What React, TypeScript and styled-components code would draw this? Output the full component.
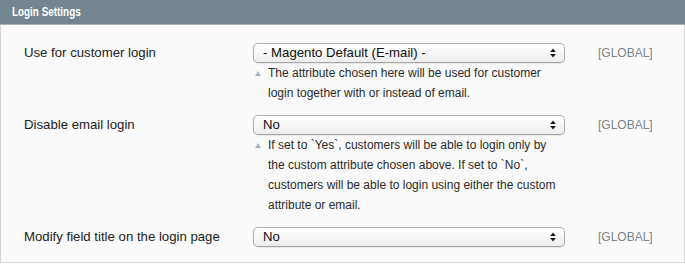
import React from "react";
import styled, { createGlobalStyle } from "styled-components";

const GlobalStyle = createGlobalStyle`
  html, body { margin: 0; padding: 0; background: #ffffff; }
  body { font-family: "Liberation Sans", Arial, Helvetica, sans-serif; }
`;

const Panel = styled.section`
  width: 685px;
`;

const Header = styled.div`
  box-sizing: border-box;
  height: 25px;
  background: #738690;
  border-bottom: 1px solid #a7b3ba;
  padding-left: 12px;
  display: flex;
  align-items: center;
`;

const HeaderTitle = styled.h3`
  margin: 0;
  color: #ffffff;
  font-family: "Liberation Sans", Arial, sans-serif;
  font-weight: bold;
  font-size: 13.2px;
  line-height: 24px;
  transform: scaleX(0.75);
  transform-origin: left center;
  white-space: nowrap;
`;

const Body = styled.div`
  background: #fafafa;
  border: 1px solid #d6d6d6;
  border-top: none;
  padding: 18px 0 15px 23px;
  display: flex;
  flex-direction: column;
  gap: 12px;
`;

const Row = styled.div`
  display: grid;
  grid-template-columns: 229px 312px auto;
  align-items: start;
`;

const Label = styled.label`
  font-size: 13.2px;
  line-height: 20px;
  color: #222;
`;

const Field = styled.div`
  display: flex;
  flex-direction: column;
`;

const SelectWrap = styled.div`
  position: relative;
  height: 20px;
`;

const Select = styled.select`
  appearance: none;
  -webkit-appearance: none;
  width: 100%;
  height: 20px;
  box-sizing: border-box;
  margin: 0;
  padding: 0 24px 0 9px;
  border: 1px solid #b0b0b0;
  border-bottom-color: #a4a4a4;
  border-radius: 5px;
  background: linear-gradient(#ffffff 0%, #f7f7f7 50%, #ececec 100%);
  box-shadow: 0 1px 1px rgba(0, 0, 0, 0.08);
  font-family: "Liberation Sans", Arial, Helvetica, sans-serif;
  font-size: 13.2px;
  line-height: 18px;
  color: #111;
  outline: none;
`;

const Arrows = styled.svg`
  position: absolute;
  right: 9px;
  top: 5px;
  pointer-events: none;
`;

const Note = styled.div`
  display: flex;
  align-items: flex-start;
  padding-left: 2px;
`;

const NoteIcon = styled.span`
  width: 13px;
  flex: none;
  height: 20px;
  display: flex;
  align-items: center;
`;

const NoteText = styled.p`
  margin: 0;
  font-size: 12px;
  line-height: 20px;
  color: #2a2a2a;
`;

const Scope = styled.span`
  padding-left: 33px;
  font-size: 12px;
  line-height: 20px;
  color: #7a848c;
`;

type Setting = {
  label: string;
  value: string;
  note?: string;
};

const settings: Setting[] = [
  {
    label: "Use for customer login",
    value: "- Magento Default (E-mail) -",
    note: "The attribute chosen here will be used for customer login together with or instead of email.",
  },
  {
    label: "Disable email login",
    value: "No",
    note: "If set to `Yes`, customers will be able to login only by the custom attribute chosen above. If set to `No`, customers will be able to login using either the custom attribute or email.",
  },
  {
    label: "Modify field title on the login page",
    value: "No",
  },
];

export default function App() {
  return (
    <Panel>
      <GlobalStyle />
      <Header>
        <HeaderTitle>Login Settings</HeaderTitle>
      </Header>
      <Body>
        {settings.map((s) => (
          <Row key={s.label}>
            <Label>{s.label}</Label>
            <Field>
              <SelectWrap>
                <Select defaultValue={s.value}>
                  <option>{s.value}</option>
                </Select>
                <Arrows width="6" height="10" viewBox="0 0 6 10">
                  <path d="M3 0.5 L5.8 4 L0.2 4 Z" fill="#1a1a1a" />
                  <path d="M3 9.5 L5.8 6 L0.2 6 Z" fill="#1a1a1a" />
                </Arrows>
              </SelectWrap>
              {s.note && (
                <Note>
                  <NoteIcon>
                    <svg width="6" height="5" viewBox="0 0 6 5">
                      <path d="M3 0 L6 5 L0 5 Z" fill="#a9b2b9" />
                    </svg>
                  </NoteIcon>
                  <NoteText>{s.note}</NoteText>
                </Note>
              )}
            </Field>
            <Scope>[GLOBAL]</Scope>
          </Row>
        ))}
      </Body>
    </Panel>
  );
}
